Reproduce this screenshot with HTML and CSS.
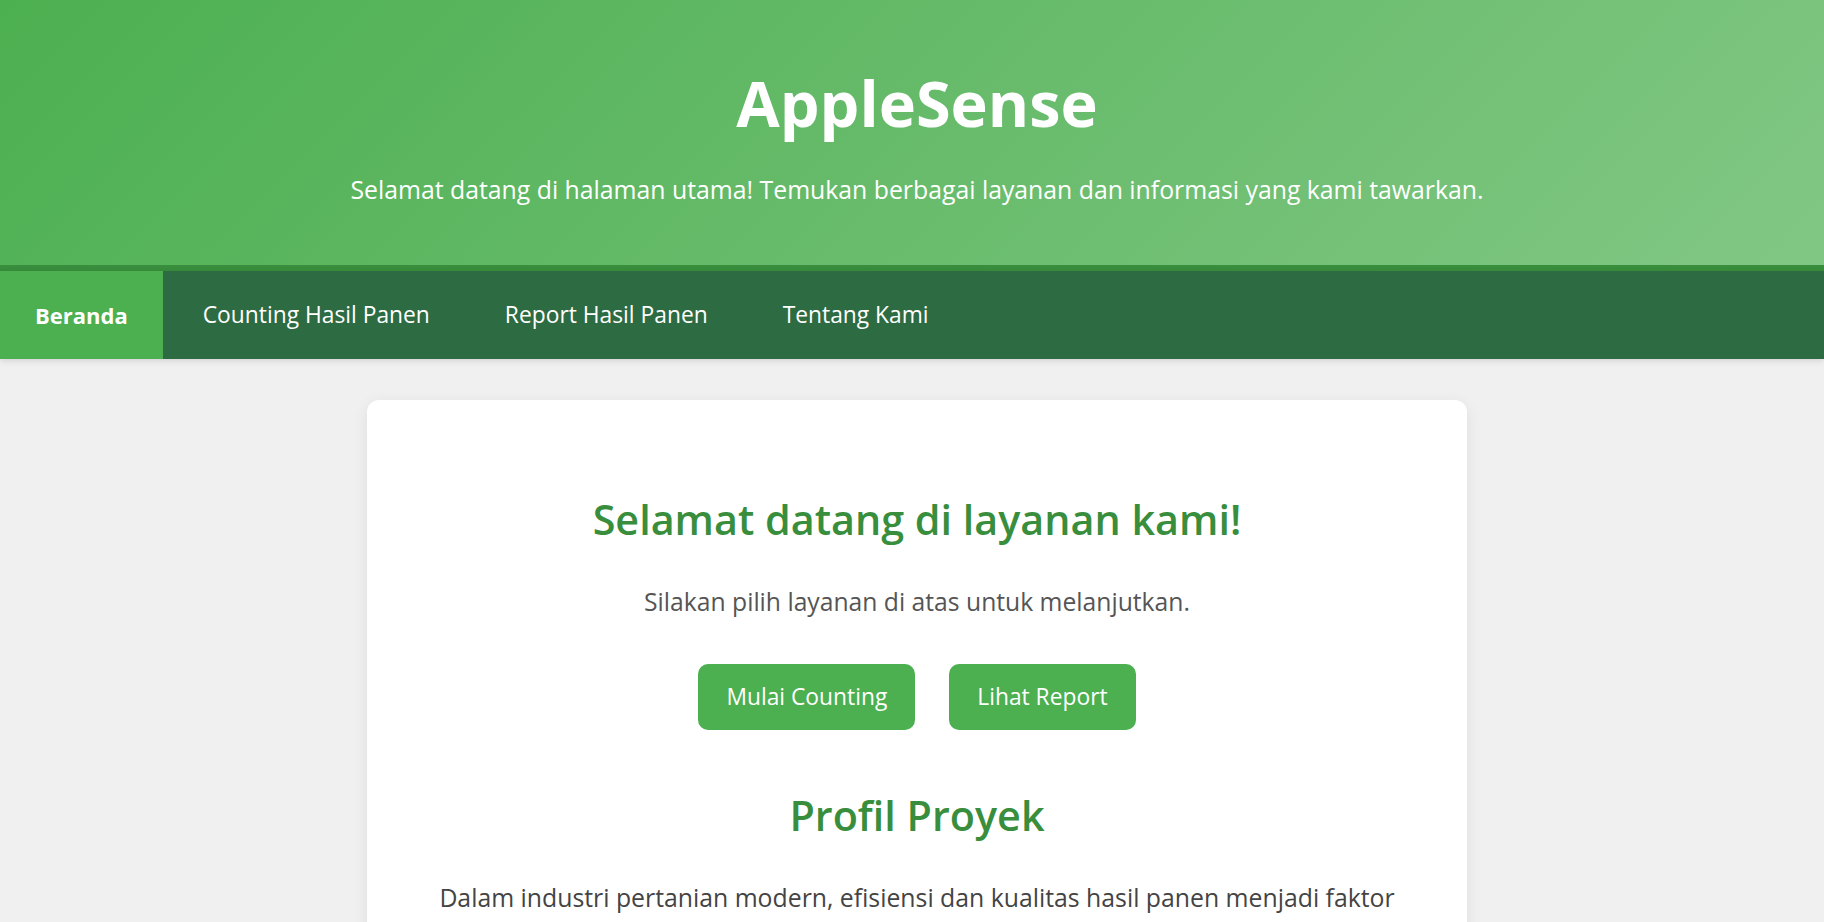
FILE: index.html
```html
<!DOCTYPE html>
<html lang="id">
<head>
<meta charset="utf-8">
<title>AppleSense</title>
<link rel="stylesheet" href="styles.css">
</head>
<body>
<header class="hero">
  <h1 class="hero-title">AppleSense</h1>
  <p class="hero-sub">Selamat datang di halaman utama! Temukan berbagai layanan dan informasi yang kami tawarkan.</p>
</header>
<nav class="nav">
  <a class="nav-link active" href="#">Beranda</a>
  <a class="nav-link" href="#">Counting Hasil Panen</a>
  <a class="nav-link" href="#">Report Hasil Panen</a>
  <a class="nav-link" href="#">Tentang Kami</a>
</nav>
<main class="main">
  <section class="card">
    <h2 class="card-title">Selamat datang di layanan kami!</h2>
    <p class="card-lead">Silakan pilih layanan di atas untuk melanjutkan.</p>
    <div class="actions">
      <a class="btn" href="#">Mulai Counting</a>
      <a class="btn" href="#">Lihat Report</a>
    </div>
    <h2 class="card-title second">Profil Proyek</h2>
    <p class="card-text">Dalam industri pertanian modern, efisiensi dan kualitas hasil panen menjadi faktor penting yang menentukan keberhasilan usaha tani. AppleSense hadir untuk membantu petani apel menghitung dan melaporkan hasil panen secara cepat dan akurat.</p>
  </section>
</main>
</body>
</html>
```

FILE: styles.css
```css
* { box-sizing: border-box; }

body {
  margin: 0;
  background: #f0f0f0;
  font-family: "Open Sans", "Noto Sans", sans-serif;
  color: #444;
}

.hero {
  background: linear-gradient(135deg, #4caf50, #81c784);
  color: #fff;
  text-align: center;
  padding: 66px 20px 59px 30px;
  border-bottom: 6px solid #388e3c;
}

.hero-title {
  margin: 0;
  font-size: 63px;
  line-height: 74px;
  font-weight: 700;
}

.hero-sub {
  margin: 32px 0 0;
  font-size: 24.8px;
  line-height: 34px;
}

.nav {
  display: flex;
  gap: 5px;
  background: #2d6b42;
  box-shadow: 0 2px 6px rgba(0, 0, 0, 0.12);
  position: relative;
}

.nav-link {
  display: block;
  padding: 0 35px;
  line-height: 88px;
  font-size: 22.8px;
  color: #fff;
  text-decoration: none;
}

.nav-link.active {
  background: #4caf50;
  font-weight: 700;
  font-size: 22px;
}

.main {
  padding: 41px 0 40px 10px;
}

.card {
  max-width: 1100px;
  margin: 0 auto;
  background: #fff;
  border-radius: 12px;
  box-shadow: 0 4px 16px rgba(0, 0, 0, 0.08);
  padding: 95px 50px 40px;
  text-align: center;
}

.card-title {
  margin: 0;
  font-size: 41.3px;
  line-height: 48px;
  font-weight: 600;
  color: #388e3c;
}

.card-title.second {
  margin-top: 61px;
}

.card-lead {
  margin: 41.5px 0 0;
  font-size: 24.7px;
  line-height: 34px;
  color: #555;
}

.actions {
  display: flex;
  justify-content: center;
  gap: 34px;
  margin-top: 45px;
}

.btn {
  display: block;
  background: #4caf50;
  color: #fff;
  text-decoration: none;
  font-size: 22.8px;
  line-height: 30px;
  padding: 18px 28px;
  border-radius: 10px;
}

.card-text {
  margin: 41px 0 0;
  font-size: 24.8px;
  line-height: 34px;
  color: #444;
}
```
